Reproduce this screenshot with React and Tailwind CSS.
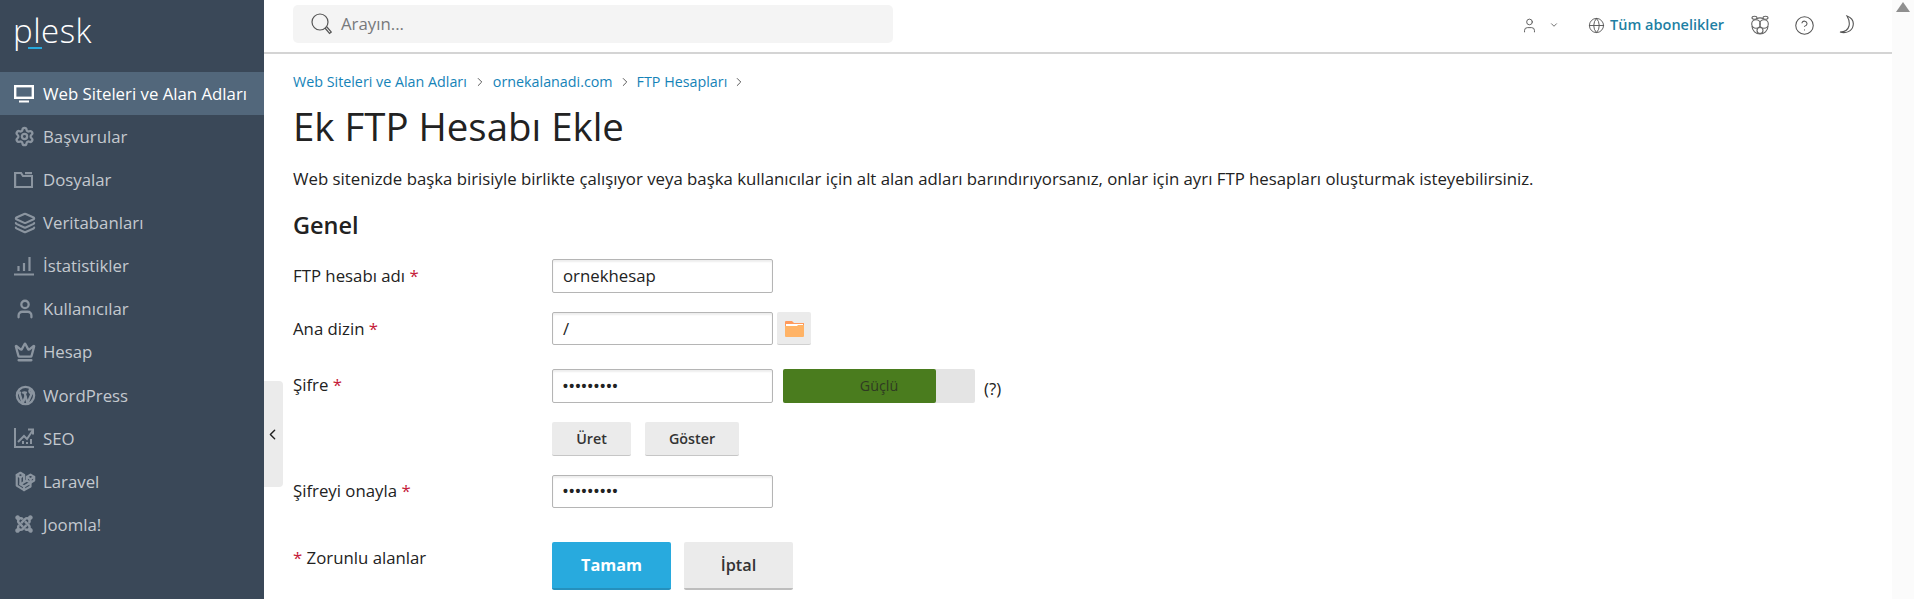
import React from "react";
import { Settings, Layers, User, Crown, ChevronLeft, ChevronRight, ChevronDown, Globe, CircleHelp } from "lucide-react";
import { TbBrandWordpress, TbBrandLaravel } from "react-icons/tb";
import { FaJoomla } from "react-icons/fa";

const MonitorIcon = () => (
  <svg width="20" height="18" viewBox="0 0 20 18" fill="none" stroke="currentColor">
    <rect x="1.2" y="1.2" width="17.6" height="11.6" strokeWidth="2.4" />
    <path d="M5 16.5h10" strokeWidth="2" />
  </svg>
);

const FolderIcon = () => (
  <svg width="19" height="16" viewBox="0 0 19 16" fill="none" stroke="currentColor" strokeWidth="2.2">
    <path d="M1.100 1v14h17V4H9L7 1z" />
    <path d="M11 1.100h7" />
  </svg>
);

const StatsIcon = () => (
  <svg width="20" height="20" viewBox="0 0 20 20" fill="none" stroke="currentColor" strokeWidth="2.200">
    <path d="M0 18.500h20M4.500 15v-5M10 15V7M15.500 15V1" />
  </svg>
);

const SeoIcon = () => (
  <svg width="20" height="20" viewBox="0 0 20 20" fill="none" stroke="currentColor" strokeWidth="2">
    <path d="M1 0v19h19" />
    <path d="M4 14l6-6 3 3 6-9M14 1.500h5v5" />
    <path d="M9 16v-3M13 16v-2M17 16v-5" />
  </svg>
);

const OwlIcon = () => (
  <svg width="20" height="20" viewBox="0 0 20 20" fill="none" stroke="#666" strokeWidth="1.100">
    <ellipse cx="4.500" cy="2.800" rx="2.500" ry="1.500" />
    <ellipse cx="15.500" cy="2.800" rx="2.500" ry="1.500" />
    <circle cx="6" cy="9" r="4.300" />
    <circle cx="14" cy="9" r="4.300" />
    <path d="M7 4c1-1.500 5-1.500 6 0M2 11c0 5 4 8 8 8s8-3 8-8" />
    <circle cx="10" cy="15.500" r="3" />
  </svg>
);

const MoonIcon = () => (
  <svg width="18" height="20" viewBox="0 0 18 20" fill="none" stroke="#555" strokeWidth="1.100">
    <path d="M9 1c5 2 7 6 6 10-1 5-7 8-13 6 5 0 8-2 9-6 1-4-.5-7.500-2-10z" />
  </svg>
);

const SearchIcon = () => (
  <svg width="21" height="22" viewBox="0 0 21 22" fill="none" stroke="#555" strokeWidth="1.200" className="mr-[9px]">
    <circle cx="9" cy="9" r="8" />
    <path d="M14 15l4.500 5.500 1.800-1.500-4.800-5.500" />
  </svg>
);

const menu = [
  { label: "Başvurular", icon: <Settings size={21} strokeWidth={2.6} /> },
  { label: "Dosyalar", icon: <FolderIcon /> },
  { label: "Veritabanları", icon: <Layers size={22} strokeWidth={2.300} /> },
  { label: "İstatistikler", icon: <StatsIcon /> },
  { label: "Kullanıcılar", icon: <User size={22} strokeWidth={2.500} /> },
  { label: "Hesap", icon: <Crown size={22} strokeWidth={2.500} /> },
  { label: "WordPress", icon: <TbBrandWordpress size={23} strokeWidth={2.400} /> },
  { label: "SEO", icon: <SeoIcon /> },
  { label: "Laravel", icon: <TbBrandLaravel size={22} strokeWidth={2.400} /> },
  { label: "Joomla!", icon: <FaJoomla size={20} /> },
];

const Sidebar = () => (
  <aside className="w-[264px] shrink-0 bg-[#3a4858] h-full">
    <div className="h-[72px] pl-[13px] pt-[9px] relative">
      <span className="text-[33px] leading-[44px] font-light text-white tracking-[0.5px]">plesk</span>
      <div className="absolute left-[28px] top-[47px] w-[14px] h-[2px] bg-[#28aade]" />
    </div>
    <div className="h-[43px] bg-[#52677b] flex items-center pl-[14px] text-white text-[16.8px]">
      <span className="w-[29px] flex"><MonitorIcon /></span>
      <span>Web Siteleri ve Alan Adları</span>
    </div>
    {menu.map((item) => (
      <div key={item.label} className="h-[43.1px] flex items-center pl-[14px] text-[16.8px] text-[#c4c9cf]">
        <span className="w-[29px] flex text-[#8b95a0]">{item.icon}</span>
        <span>{item.label}</span>
      </div>
    ))}
  </aside>
);

const Topbar = () => (
  <header className="h-[54px] shrink-0 border-b-2 border-[#d4d4d4] flex items-center pl-[29px] pb-[4px] bg-white">
    <div className="w-[600px] h-[38px] rounded-[5px] bg-[#f4f4f4] flex items-center pl-[18px] text-[16.8px] text-[#77797b]">
      <SearchIcon />
      Arayın...
    </div>
    <div className="ml-auto flex items-center pr-[36px] pt-[2px] text-[#555]">
      <User size={17} strokeWidth={1.3} />
      <ChevronDown size={10} className="ml-[11px]" />
      <Globe size={17} strokeWidth={1.300} className="ml-[29px]" />
      <span className="ml-[5px] text-[14.5px] font-semibold text-[#1e7fa3]">Tüm abonelikler</span>
      <span className="ml-[26px] flex"><OwlIcon /></span>
      <CircleHelp size={21} strokeWidth={1.200} className="ml-[24px]" />
      <span className="ml-[23px] flex"><MoonIcon /></span>
    </div>
  </header>
);

const Req = () => <span className="text-[#c51b3a]"> *</span>;

const TextBox = ({ value, dots, className = "h-[34px]" }) => (
  <div className={`w-[221px] ${className} border border-[#b5b5b5] rounded-[2px] shadow-[inset_0_2px_2px_#eeeeee] bg-white flex items-center pl-[10px] text-[16.8px] text-[#222]`}>
    {dots ? <span className="text-[14px] tracking-[1.3px] font-['Liberation_Sans',sans-serif] font-bold">•••••••••</span> : value}
  </div>
);

const Row = ({ label, className, pad = "pt-[5px]", children }) => (
  <div className={`flex ${className}`}>
    <div className={`w-[259px] shrink-0 text-[16.8px] text-[#222] leading-[22px] ${pad}`}>{label}</div>
    {children}
  </div>
);

const GrayButton = ({ children, className }) => (
  <button className={`bg-[#ebebeb] border-b border-[#c6c6c6] rounded-[2px] font-semibold text-[#333] ${className}`}>{children}</button>
);

const Form = () => (
  <main className="flex-1 pl-[29px] overflow-hidden">
    <nav className="flex items-center h-[20px] mt-[17.5px] text-[14.3px] text-[#1583b8]">
      <span>Web Siteleri ve Alan Adları</span>
      <ChevronRight size={14} strokeWidth={1.5} className="text-[#444] mx-[6px]" />
      <span>ornekalanadi.com</span>
      <ChevronRight size={14} strokeWidth={1.5} className="text-[#444] mx-[5px]" />
      <span>FTP Hesapları</span>
      <ChevronRight size={14} strokeWidth={1.5} className="text-[#444] mx-[5px]" />
    </nav>
    <h1 className="text-[38.4px] leading-[50px] text-[#222] mt-[9.5px]">Ek FTP Hesabı Ekle</h1>
    <p className="text-[16.8px] leading-[24px] text-[#222] mt-[16px]">
      Web sitenizde başka birisiyle birlikte çalışıyor veya başka kullanıcılar için alt alan adları barındırıyorsanız, onlar için ayrı FTP hesapları oluşturmak isteyebilirsiniz.
    </p>
    <h2 className="text-[23.5px] leading-[30px] font-semibold text-[#222] mt-[19px]">Genel</h2>

    <Row className="mt-[19px]" pad="pt-[6px]" label={<>FTP hesabı adı<Req /></>}>
      <TextBox value="ornekhesap" />
    </Row>
    <Row className="mt-[19px]" pad="pt-[6px]" label={<>Ana dizin<Req /></>}>
      <TextBox value="/" className="h-[33px]" />
      <button className="ml-[4px] w-[34px] h-[33px] bg-[#ebebeb] border-b border-[#d0d0d0] rounded-[2px] flex items-center justify-center">
        <svg width="19" height="17" viewBox="0 0 19 17">
          <path d="M0 2a1 1 0 0 1 1-1h6l2 2h10v3H0z" fill="#ff9a5c" />
          <rect x="1" y="4" width="17" height="3" fill="#fff" />
          <path d="M0 6h12l1-1h6v11a1 1 0 0 1-1 1H1a1 1 0 0 1-1-1z" fill="#ffb366" />
        </svg>
      </button>
    </Row>
    <Row className="mt-[24px]" label={<>Şifre<Req /></>}>
      <TextBox dots />
      <div className="ml-[10px] w-[192px] h-[34px] bg-[#e4e4e4] rounded-[2px] relative">
        <div className="w-[153px] h-full bg-[#4a7c1e] rounded-[2px]" />
        <span className="absolute inset-0 flex items-center justify-center text-[14.3px] text-[#2f3a22]">Güçlü</span>
      </div>
      <span className="ml-[9px] text-[16.8px] text-[#222] leading-[22px] pt-[9px]">(?)</span>
    </Row>
    <div className="flex gap-[14px] ml-[259px] mt-[19px]">
      <GrayButton className="w-[79px] h-[34px] text-[14.3px]">Üret</GrayButton>
      <GrayButton className="w-[94px] h-[34px] text-[14.3px]">Göster</GrayButton>
    </div>
    <Row className="mt-[19px]" label={<>Şifreyi onayla<Req /></>}>
      <TextBox dots className="h-[33px]" />
    </Row>
    <Row className="mt-[34px]" label={<><span className="text-[#c51b3a]">*</span> Zorunlu alanlar</>}>
      <div className="flex gap-[13px]">
        <button className="w-[119px] h-[48px] bg-[#28aade] border-b-2 border-[#2590bd] rounded-[2px] text-white font-bold text-[16.3px]">Tamam</button>
        <GrayButton className="w-[109px] h-[48px] text-[16.3px] !border-b-2 !border-[#bdbdbd]">İptal</GrayButton>
      </div>
    </Row>
  </main>
);

export default function App() {
  return (
    <div className="flex h-[599px] w-full overflow-hidden bg-white relative font-['Open_Sans',sans-serif]">
      <Sidebar />
      <div className="flex-1 flex flex-col min-w-0">
        <Topbar />
        <Form />
      </div>
      <div className="w-[22px] shrink-0 bg-[#fbfbfb] flex justify-center pt-[1px]">
        <div className="mt-[1px] w-0 h-0 border-x-[7px] border-x-transparent border-b-[10px] border-b-[#8f8f8f]" />
      </div>
      {/* sidebar collapse handle */}
      <div className="absolute left-[264px] top-[381px] w-[19px] h-[106px] bg-[#ebebeb] rounded-r-[4px] flex items-center justify-center">
        <ChevronLeft size={17} strokeWidth={2} className="text-[#222] -ml-[2px]" />
      </div>
    </div>
  );
}
